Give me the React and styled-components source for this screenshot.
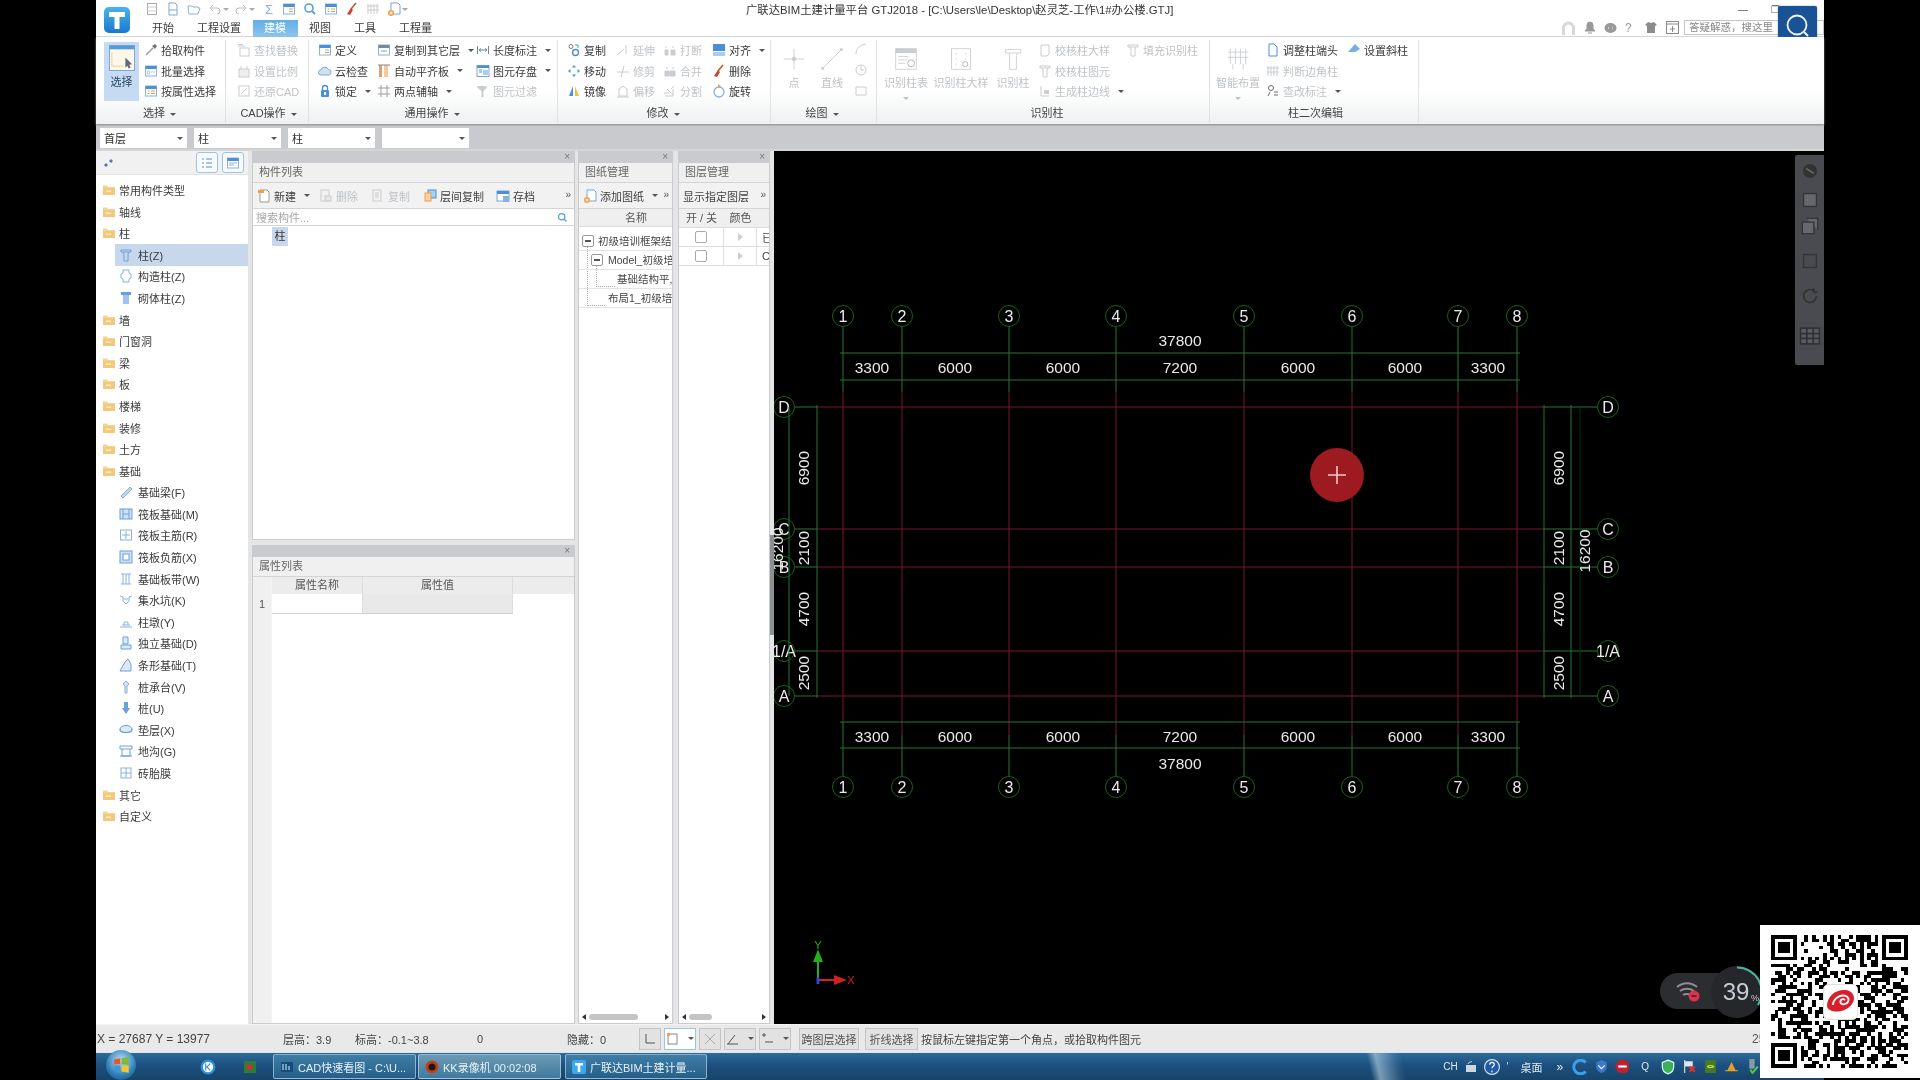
import React from 'react';
import styled, { createGlobalStyle } from 'styled-components';

const Global = createGlobalStyle`
  html, body { margin: 0; padding: 0; background: #000; overflow: hidden; }
  * { box-sizing: border-box; }
  svg { display: block; flex: none; }
`;
const FONT = '"Liberation Sans","Noto Sans CJK SC",sans-serif';

const Screen = styled.div`
  position: relative; width: 1920px; height: 1080px; background: #000; overflow: hidden;
  padding: 0 96px; font: 11px ${FONT}; color: #3a3a3a; filter: blur(.35px);
`;
const AppFrame = styled.div`display: flex; flex-direction: column; width: 1728px; height: 1080px;`;

/* ---------- title bar ---------- */
const TitleBar = styled.div`position: relative; display: flex; height: 37px; background: #fff; border-bottom: 1px solid #dcdcdc;`;
const LogoBox = styled.div`width: 46px; padding: 7px 0 0 8px;`;
const TitleStack = styled.div`flex: 1; display: flex; flex-direction: column; min-width: 0;`;
const TopRow = styled.div`display: flex; align-items: center; height: 20px; padding-bottom: 2px;`;
const QuickBar = styled.div`display: flex; align-items: center; gap: 7px; width: 604px; padding-left: 3px;`;
const WindowTitle = styled.div`font-size: 11.35px; color: #333; white-space: nowrap; width: 981px;`;
const WinBtn = styled.div`width: 32px; display: flex; justify-content: center; color: #555; font-size: 10px;`;
const TabRow = styled.div`display: flex; align-items: stretch; height: 16px;`;
const Tabs = styled.div`display: flex; margin-left: -1.5px;`;
const Tab = styled.div`
  padding: 0 11.5px; line-height: 16px; height: 17px; font-size: 11px;
  color: ${p => (p.$on ? '#fff' : '#3a3a3a')}; background: ${p => (p.$on ? 'linear-gradient(#62aee6,#8cc4ee)' : 'none')};
`;
const RightTools = styled.div`display: flex; align-items: center; gap: 8px; margin-left: auto; padding-bottom: 1px;`;
const AskBox = styled.div`
  width: 140px; height: 15px; border: 1px solid #c4c4c4; color: #888; font-size: 10.5px; line-height: 13px; padding-left: 4px; background: #fff; margin-left: -3px;
`;
const SearchBtn = styled.div`
  position: absolute; left: 1682px; top: 6px; width: 39px; height: 39px; background: #1a5296; border-radius: 2px;
  display: flex; align-items: center; justify-content: center; box-shadow: 0 0 2px #8aa;
`;

/* ---------- ribbon ---------- */
const Ribbon = styled.div`
  display: flex; height: 87px; background: linear-gradient(#fff 0, #fff 62%, #eef0f1 100%); box-shadow: 0 1px 2px #888; position: relative; z-index: 1;
`;
const Group = styled.div`
  width: ${p => p.$w}px; display: flex; flex-direction: column; border-right: 1px solid #e0e2e4; margin: 3px 0 1px;
`;
const GroupBody = styled.div`flex: 1; display: flex; padding: 0 0 0 ${p => p.$pl || 0}px;`;
const GroupLabel = styled.div`
  height: 17px; line-height: 14px; text-align: center; font-size: 11px; color: #444; padding: 0 ${p => p.$pr || 0}px 0 ${p => p.$pl || 0}px;
`;
const Caret = styled.span`display: inline-block; margin-left: 5px; border: 3px solid transparent; border-top: 3.5px solid #555; border-bottom: 0; vertical-align: middle;`;
const QaCaret = styled(Caret)`margin: 0 ${p => p.$mr}px 0 -6px; border-top-color: #aaa;`;
const BigCaret = styled(Caret)`margin: 4px 0 0; border-top-color: #bfc3c7;`;
const Col = styled.div`width: ${p => p.$w}px; display: flex; flex-direction: column; padding-top: 0;`;
const RowItem = styled.div`
  height: 20.6px; display: flex; align-items: center; gap: 3px; white-space: nowrap; font-size: 11px;
  color: ${p => (p.$dis ? '#bfc3c7' : '#3a3a3a')};
`;
const BigSel = styled.div`
  width: 35px; height: 59px; margin: 2px 5px 0 0; background: #c6daf1; display: flex; flex-direction: column; align-items: center; padding-top: 3px; gap: 2px; font-size: 11px; color: #2c4a6a;
`;
const BigItem = styled.div`
  width: ${p => p.$w}px; display: flex; flex-direction: column; align-items: center; padding-top: 7px; gap: 3px; font-size: 11px; white-space: nowrap; color: #bfc3c7;
`;
const SmallStack = styled.div`display: flex; flex-direction: column; gap: 6.5px; padding: 2px 0 0 3px;`;

/* ---------- selector toolbar ---------- */
const SelBar = styled.div`display: flex; height: 27px; background: #c8cacd; padding: 4px 0 0 4px; gap: 7px; border-bottom: 2px solid #d4d5d7;`;
const Drop = styled.div`
  width: 87px; height: 20px; background: #fff; display: flex; align-items: center; justify-content: space-between; padding: 0 4px; font-size: 11px; color: #333;
`;

/* ---------- workspace ---------- */
const Workspace = styled.div`flex: 1; display: flex; min-height: 0; background: #e4e5e6;`;
const TreePanel = styled.div`width: 152px; background: #fff; display: flex; flex-direction: column; margin-right: 4px;`;
const TreeTop = styled.div`height: 24px; background: #f1f1f1; display: flex; align-items: center; padding: 0 4px 0 5px; gap: 4px; border-bottom: 1px solid #e2e2e2;`;
const ViewBtn = styled.div`width: 22px; height: 21px; border: 1px solid #9cc3e6; border-radius: 3px; background: #f7fbff; display: flex; align-items: center; justify-content: center; margin-left: ${p => (p.$first ? 'auto' : 0)};`;
const TreeBody = styled.div`padding-top: 4.2px;`;
const TreeRow = styled.div`
  height: 21.6px; display: flex; align-items: center; gap: ${p => (p.$leaf ? '5px' : '3px')}; margin-left: ${p => (p.$leaf ? 19 : 0)}px;
  padding-left: ${p => (p.$leaf ? 4 : 6)}px; background: ${p => (p.$sel ? '#c8d8ec' : 'none')}; white-space: nowrap; font-size: 11px; color: #3a3a3a;
`;

const Stackd = styled.div`width: ${p => p.$w}px; display: flex; flex-direction: column; margin-right: ${p => p.$mr || 0}px; gap: 5px;`;
const Panel = styled.div`
  flex: ${p => (p.$h ? 'none' : 1)}; height: ${p => (p.$h ? p.$h + 'px' : 'auto')}; min-height: 0; background: #fff; border: 1px solid #c9cbcd; border-top: 0;
  display: flex; flex-direction: column; position: relative; overflow: hidden;
`;
const PanelStripe = styled.div`height: 12px; background: #c9cbce; color: #777; font-size: 10px; line-height: 11px; text-align: right; padding-right: 4px; flex: none;`;
const PanelTitle = styled.div`height: 20px; background: #f0f0f0; color: #666; line-height: 19px; padding-left: 6px; font-size: 11px; flex: none; border-bottom: 1px solid #d4d4d4;`;
const PanelTools = styled.div`height: 26px; background: #f2f2f2; border-bottom: 1px solid #d4d4d4; display: flex; align-items: center; padding-left: 4px; flex: none; position: relative;`;
const ToolItem = styled.div`
  width: ${p => p.$w}px; display: flex; align-items: center; gap: 3px; white-space: nowrap; font-size: 11px; color: ${p => (p.$dis ? '#bfc3c7' : '#3f3f3f')};
`;
const MoreMark = styled.div`position: absolute; right: 3px; top: 6px; color: #555; font-size: 10px; line-height: 12px;`;
const SearchRow = styled.div`height: 17px; border-bottom: 1px solid #d4d4d4; display: flex; align-items: center; justify-content: space-between; padding: 0 6px 0 3px; color: #a8a8a8; font-size: 11px; flex: none;`;
const ListBody = styled.div`padding: 1px 0 0 19px;`;
const ListChip = styled.div`width: 16px; height: 19px; background: #c8d8ec; text-align: center; line-height: 19px; color: #333;`;

const PropGrid = styled.div`flex: 1; display: flex; min-height: 0;`;
const RowNums = styled.div`width: 19px; background: #f0f0f0; padding-top: 17px; border-right: 1px solid #f4f4f4;`;
const RowNum = styled.div`height: 20px; line-height: 20px; text-align: center; color: #555; font-size: 11px;`;
const PropTable = styled.div`flex: 1; display: flex; flex-direction: column;`;
const PropRow = styled.div`display: grid; grid-template-columns: 91px 150px 1fr; height: ${p => p.$h}px;`;
const PropHead = styled.div`background: #ececec; border-right: ${p => (p.$last ? 0 : '1px solid #dcdcdc')}; text-align: center; line-height: 17px; color: #555; font-size: 11px;`;
const PropCell = styled.div`background: ${p => p.$c}; border-bottom: 1px solid #cfcfcf; border-right: 1px solid #dcdcdc;`;

const DrawHead = styled.div`height: 18px; background: #efefef; text-align: center; line-height: 18px; color: #555; border-bottom: 1px solid #ddd; flex: none; padding-left: 21px;`;
const DrawTree = styled.div`position: relative; padding-top: 4.5px; flex: 1;`;
const DrawRow = styled.div`
  position: relative; height: 19px; line-height: 18px; border-bottom: 1px solid #e4e4e4; padding-left: ${p => p.$pl}px; white-space: nowrap; overflow: hidden; font-size: 10.5px; color: #444;
`;
const Expander = styled.span`
  position: absolute; left: ${p => p.$x}px; top: 3px; width: 12px; height: 12px; border: 1px solid #999; border-radius: 2px; background: #fff;
  &::after { content: ''; position: absolute; left: 2px; right: 2px; top: 4px; height: 2px; background: #555; }
`;
const Connector = styled.span`
  position: absolute; left: ${p => p.$x}px; top: ${p => p.$y}px; width: ${p => p.$w}px; height: ${p => p.$h}px; border-left: 1px dotted #aaa; border-bottom: 1px dotted #aaa;
`;
const HScroll = styled.div`
  height: 13px; flex: none; display: flex; align-items: center; justify-content: space-between; padding: 0 3px; background: #fff;
`;
const ScrollThumb = styled.div`width: ${p => p.$w}px; height: 6px; background: #c4c4c4; border-radius: 3px; margin: 0 auto 0 3px;`;
const Arrow = styled.span`
  border: 3.5px solid transparent; ${p => (p.$r ? 'border-left: 4px solid #333; border-right: 0;' : 'border-right: 4px solid #333; border-left: 0;')}
`;
const LayerHead = styled.div`display: grid; grid-template-columns: 45px 33px 1fr; height: 19px; background: #efefef; border-bottom: 1px solid #ddd; line-height: 18px; color: #555; flex: none; text-align: center;`;
const LayerRow = styled.div`display: grid; grid-template-columns: 45px 33px 1fr; height: 19px; border-bottom: 1px solid #ddd; align-items: stretch;`;
const LayerCell = styled.div`border-right: 1px solid #ddd; display: flex; align-items: center; justify-content: center; overflow: hidden; font-size: 11px; color: #444;`;
const LayerName = styled(LayerCell)`justify-content: flex-start; padding-left: 5px; border-right: 0; white-space: nowrap;`;
const Check = styled.span`width: 12px; height: 12px; border: 1px solid #aaa; border-radius: 2px; background: #fff;`;
const PlayMark = styled.span`border: 4px solid transparent; border-left: 5px solid #cfcfcf; border-right: 0;`;

const Splitter = styled.div`width: 4px; display: flex; align-items: center; background: #e4e5e6;`;
const SplitGrip = styled.div`width: 4px; height: 100px; background: #8c8f93; margin-top: -6px;`;
const Canvas = styled.div`position: relative; width: 1050px; background: #000; overflow: hidden;`;
const FloatBar = styled.div`
  position: absolute; right: 0; top: 4px; width: 29px; height: 210px; background: #4a4b50; display: flex; flex-direction: column; align-items: center; padding-top: 7px; border-radius: 2px 0 0 2px;
`;
const FloatIcon = styled.div`margin-bottom: ${p => p.$mb}px;`;

/* ---------- status + taskbar ---------- */
const Status = styled.div`height: 28px; background: #e9e9e9; display: flex; align-items: center; font-size: 11px; color: #444; border-top: 1px solid #f2f2f2;`;
const StatusCell = styled.div`width: ${p => p.$w}px; white-space: nowrap; font-size: ${p => p.$fs || 11}px; padding-left: ${p => p.$pl || 0}px;`;
const StatusEnd = styled.div`margin-left: auto; width: 72px; white-space: nowrap; font-size: 12px; color: #555;`;
const StatusBtn = styled.div`
  width: ${p => p.$w}px; height: 22px; display: flex; align-items: center; justify-content: center; gap: 3px; margin-right: ${p => p.$mr || 2}px;
  border: 1px solid ${p => (p.$sel ? '#9cc3e6' : '#c4c4c4')}; background: ${p => (p.$sel ? '#fff' : '#e2e2e2')}; font-size: 11px; color: #555; white-space: nowrap;
`;
const Task = styled.div`
  height: 28px; display: flex; align-items: center; padding-left: 1px; border-top: 1px solid #d9e6ee;
  background: linear-gradient(77deg, transparent 73.6%, rgba(200,225,240,.55) 74.1%, rgba(200,225,240,.1) 75.2%, transparent 75.6%), linear-gradient(#2d6b98, #1c5080 45%, #174468);
`;
const Orb = styled.div`
  width: 30px; height: 30px; border-radius: 50%; margin: -3px 0 0 9px; background: radial-gradient(circle at 50% 35%, #b7dff5, #2f7fb8 60%, #12476f); display: flex; align-items: center; justify-content: center; flex: none;
`;
const PinSlot = styled.div`width: ${p => p.$w}px; display: flex; justify-content: center; flex: none;`;
const TaskBtn = styled.div`
  width: ${p => p.$w}px; height: 25px; margin-right: ${p => p.$mr || 2}px; display: flex; align-items: center; gap: 4px; padding-left: 6px; color: #e8f1f6; font-size: 11px; white-space: nowrap; overflow: hidden; flex: none;
  border: 1px solid rgba(220,235,245,.55); border-radius: 2px; background: ${p => (p.$lit ? 'linear-gradient(#6c9ab4,#3e7a9e)' : 'linear-gradient(#3f7ea6,#245f8a)')};
`;
const Tray = styled.div`margin-left: auto; display: flex; align-items: center; gap: 6px; padding-right: 64px; color: #dfe9ef; font-size: 10px; white-space: nowrap;`;
const TrayText = styled.span`font-size: ${p => p.$fs || 10}px; margin: 0 ${p => p.$m || 0}px;`;

/* ---------- overlays ---------- */
const QRCard = styled.div`position: absolute; left: 1760px; top: 925px; width: 160px; height: 153px; background: #fff; padding: 10px 11px;`;
const NetPill = styled.div`position: absolute; left: 1660px; top: 973px; width: 90px; height: 36px; border-radius: 18px; background: #2b2d31; display: flex; align-items: center; padding-left: 15px;`;
const NetDial = styled.div`position: absolute; left: 1711px; top: 966px; width: 52px; height: 52px;`;

/* ---------- icon drawing helpers ---------- */
const B = '#4a90d9', L = '#a9cdf0', O = '#f0a04b', G = '#c9ccd0', D = '#6a6a6a';
const I = ({ s = 14, v = 14, children }) => <svg width={s} height={s} viewBox={`0 0 ${v} ${v}`} fill="none">{children}</svg>;
const BigIco = ({ children }) => <svg width="24" height="24" viewBox="0 0 28 28" fill="none">{children}</svg>;
const Win = ({ c = B, dis }) => (
  <>
    <rect x="1.5" y="2" width="11" height="10" fill="#fff" stroke={dis ? G : '#8ab2dc'} />
    <rect x="1.5" y="2" width="11" height="3" fill={dis ? G : c} />
  </>
);
const icons = {
  pick: <><path d="M2 12L9 5" stroke="#999" strokeWidth="1.5" /><path d="M8 3l3 3 2-3-2-2z" fill="#777" /></>,
  batch: <><Win /><path d="M3.5 7h2v3h-2zM7 8h4" stroke={L} /></>,
  attr: <><Win /><path d="M3.5 7h2M3.5 9.5h2M7 7h4M7 9.5h4" stroke="#d8a850" /></>,
  find: <><rect x="3" y="5" width="9" height="8" stroke={G} /><path d="M1 3h7M1 1.5h5" stroke={G} /></>,
  scale: <><rect x="2" y="5" width="10" height="8" stroke={G} fill="#eee" /><path d="M4 5V2M10 5V2" stroke={G} /></>,
  restore: <><rect x="2" y="2" width="10" height="10" stroke={G} /><path d="M4 10l6-6" stroke={G} /></>,
  define: <><Win /><path d="M7 7h4M7 9.5h4" stroke="#d8a850" /></>,
  cloud: <path d="M3 11a2.5 2.5 0 010-5 4 4 0 017.5-.5A2.8 2.8 0 0111 11z" fill="#cfe2f5" stroke="#7fa6cc" />,
  lock: <><rect x="3" y="6" width="8" height="7" rx="1" fill={B} /><path d="M4.5 6V4a2.5 2.5 0 015 0v2" stroke={B} strokeWidth="1.4" /><rect x="6" y="8" width="2" height="3" fill="#fff" /></>,
  copyTo: <><Win c="#7a8a9a" /><path d="M4 8h6" stroke="#999" /></>,
  align: <><rect x="2" y="1" width="3" height="12" fill="#e4a06a" /><rect x="7" y="1" width="4" height="12" fill="#f5c8a0" /><path d="M1 1h12" stroke="#888" /></>,
  twoP: <path d="M1 4h12M1 10h12M4 1v12M10 1v12" stroke="#9aa0a6" />,
  len: <path d="M1.5 3v8M12.5 3v8M3 7h8M3 7l2-1.5M3 7l2 1.5M11 7L9 5.500M11 7L9 8.500" stroke="#6a88a8" />,
  store: <><rect x="1" y="1.5" width="12" height="11" fill="#fff" stroke="#7aa5d6" /><rect x="1" y="1.5" width="12" height="2.5" fill={B} /><rect x="7" y="6" width="5" height="5" fill={L} /><path d="M3 6h3M3 8h3" stroke={B} /></>,
  filter: <path d="M1.5 2h9v2l-3 3v6h-2V7L1.5 4z" fill={G} />,
  copy: <><circle cx="4" cy="3.5" r="2" stroke="#777" /><circle cx="8.5" cy="9.5" r="3" stroke={B} strokeWidth="1.4" /><path d="M8 2h3v3" stroke={B} /></>,
  move: <path d="M7 1l2 2.5H5zM7 13l2-2.5H5zM1 7l2.5-2v4zM13 7l-2.5-2v4z" fill={B} />,
  mirror: <><path d="M6 2v10H2z" fill={B} /><path d="M8 2v10h4z" fill="#f0c040" /></>,
  ext: <path d="M1 12l7-6M10 2v9" stroke={G} />,
  trim: <path d="M1 8h12M8 2l-3 11" stroke={G} />,
  offset: <path d="M3 12V5l4-3 4 3v7zM1 13h12" stroke={G} />,
  brk: <path d="M2 7h3v5H2zM8 7h4v5H8zM3 3v2M10 3v2" stroke={G} fill={G} />,
  merge: <path d="M2 7h4v5H2zM7 7h5v5H7zM4 3v2M10 3v2" stroke={G} fill={G} />,
  split: <path d="M2 12h8V5M1 9h5M4 5l6 6M11 2l-3 3" stroke={G} />,
  alignR: <><rect x="1" y="1" width="12" height="7" fill={B} /><rect x="1" y="9" width="12" height="4" fill={L} /></>,
  del: <><path d="M11 1L6 7" stroke="#b06020" strokeWidth="1.6" /><path d="M6 6l2 2-3 5-3-1z" fill="#d04030" /></>,
  rot: <><circle cx="7" cy="8" r="5" stroke="#8ab2dc" strokeWidth="1.3" /><path d="M6 0l3 2-3 2z" fill={O} /></>,
  curve: <path d="M2 12C2 6 6 3 12 2" stroke={G} />,
  arc: <><circle cx="7" cy="7" r="5" stroke={G} /><path d="M7 3v4h3" stroke={G} /></>,
  rect: <path d="M2 4h10v8H2z" stroke={G} />,
  chk: <path d="M3 2h8v9l-2 2H3z" stroke={G} />,
  pil: <path d="M2 2h10v2H2zM4 4l1 2v7h4V6l1-2" stroke={G} />,
  gen: <><path d="M3 2v10h8" stroke={G} /><rect x="6" y="6" width="5" height="4" fill={G} /></>,
  end: <path d="M3 1h5l3 3v9H3z" stroke={B} fill="#fff" />,
  slant: <path d="M1 9l7-8 5 5-5 3z" fill="#78aee4" />,
  corner: <path d="M2 2v10M5 2v10M8 2v10M11 2v10M1 4h12M1 8h12" stroke={G} />,
  mark: <><circle cx="5" cy="4" r="2.5" stroke={D} /><path d="M2 12l2-4M8 8h4M8 11h4" stroke={D} /></>,
  folder: <><path d="M1 2.5h4l1 1.5h7v8H1z" fill="#f7d48e" /><rect x="1" y="5" width="12" height="7" fill="#f4c87a" /><rect x="4" y="7.5" width="5" height="1.4" fill="#fff" opacity=".7" /></>,
  newd: <><path d="M3 1h7l2 2v10H3z" fill="#fff" stroke="#999" /><path d="M1 1h6v3H1z" fill={O} /></>,
  deld: <><rect x="2" y="1" width="8" height="11" stroke={G} /><rect x="6" y="7" width="6" height="5" fill="#e6e6e6" stroke={G} /></>,
  copyd: <><rect x="2" y="1" width="8" height="11" stroke={G} /><path d="M4 4h4M4 6h4M4 8h4" stroke={G} /></>,
  floor: <><rect x="5" y="1" width="8" height="8" fill={L} stroke={B} /><rect x="2" y="4" width="6" height="8" fill="#f8d0a8" stroke={O} /></>,
  save: <><rect x="1" y="2" width="12" height="10" fill="#fff" stroke="#7aa5d6" /><rect x="1" y="2" width="12" height="3" fill={B} /><rect x="7" y="7" width="6" height="6" fill="#8ab2dc" /></>,
  addd: <><path d="M4 1h7l2 2v9H4z" fill="#fff" stroke="#7aa5d6" /><circle cx="4" cy="11" r="3" fill={O} /><path d="M2.5 11h3M4 9.5v3" stroke="#fff" /></>,
  zoom: <><circle cx="6" cy="6" r="4" stroke="#5a9ed0" strokeWidth="1.6" /><path d="M9 9l3 3" stroke="#5a9ed0" strokeWidth="1.8" /></>,
};
const Ico = ({ n, s }) => <I s={s}>{icons[n]}</I>;

const Row = ({ i, t, dis, caret }) => (
  <RowItem $dis={dis}><Ico n={i} />{t}{caret && <Caret />}</RowItem>
);
const G_ = ({ w, pl, label, caret, pr, lpl, children }) => (
  <Group $w={w}>
    <GroupBody $pl={pl}>{children}</GroupBody>
    <GroupLabel $pr={pr} $pl={lpl}>{label}{caret && <Caret />}</GroupLabel>
  </Group>
);

const L1 = (a, b) => <path d={a} stroke={b || '#6aa0d8'} fill="none" />;
const leafIcons = {
  col: <><path d="M2 2h10v2H2z" fill="none" stroke="#6aa0d8" />{L1('M4 4l1 2v7h4V6l1-2')}</>,
  cons: <><path d="M4 1h6v3l2 1v4l-2 1v3H4v-3L2 9V5l2-1z" stroke="#8ab2dc" fill="#fff" /></>,
  brick: <><path d="M2 1h10v3H2z" fill="#6aa0d8" /><path d="M4 4h6v9H4z" fill="#9cc4ee" /></>,
  beam: <path d="M2 11L11 2l2 2-9 9z" fill="#c4d6ea" stroke="#8ab2dc" />,
  raft: <><rect x="1" y="2" width="12" height="10" fill="#cfe2f5" stroke="#6aa0d8" />{L1('M4 2v10M10 2v10M4 7h6')}</>,
  rebar: <><rect x="1.5" y="2" width="11" height="10" fill="#fff" stroke="#8ab2dc" />{L1('M7 3v8M3 7h8', '#8ab2dc')}</>,
  neg: <><rect x="1" y="1" width="12" height="12" fill="#cfe2f5" stroke="#6aa0d8" /><rect x="4" y="4" width="6" height="6" fill="#fff" stroke="#6aa0d8" /></>,
  strip: <path d="M2 2h10M2 12h10M4 2v10M7 2v10M10 2v10" stroke="#8ab2dc" />,
  pit: <path d="M1 3l3 1v4l3 3 3-3V4l3-1M5 6h4" stroke="#8ab2dc" />,
  ped: <path d="M1 12h12M3 10h8M5 10V7h4v3" stroke="#8ab2dc" />,
  iso: <><path d="M4 1h5v7H4zM2 9h10v4H2z" fill="#dbe9f8" stroke="#6aa0d8" /></>,
  bar: <path d="M1 13l5-9 3-3 3 5v7z" fill="#dbe9f8" stroke="#6aa0d8" />,
  cap: <path d="M7 1l3 3-2 2v7H6V6L4 4z" fill="#cfe2f5" stroke="#8ab2dc" />,
  pile: <><rect x="5" y="1" width="4" height="6" fill="#6aa0d8" /><path d="M3 7h8L7 13z" fill="#6aa0d8" /></>,
  pad: <><ellipse cx="7" cy="6" rx="6" ry="3.5" fill="#dbe9f8" stroke="#6aa0d8" /><path d="M1 6v2c0 2 12 2 12 0V6" stroke="#6aa0d8" /></>,
  ditch: <path d="M1 2h12v3H1zM3 5v7h8V5M1 12h12" stroke="#6aa0d8" />,
  film: <><rect x="2" y="2" width="10" height="10" stroke="#8ab2dc" />{L1('M7 2v10M2 7h10', '#8ab2dc')}</>,
};
const tree = [
  ['常用构件类型'], ['轴线'], ['柱'],
  ['柱(Z)', 'col', 1], ['构造柱(Z)', 'cons'], ['砌体柱(Z)', 'brick'],
  ['墙'], ['门窗洞'], ['梁'], ['板'], ['楼梯'], ['装修'], ['土方'], ['基础'],
  ['基础梁(F)', 'beam'], ['筏板基础(M)', 'raft'], ['筏板主筋(R)', 'rebar'], ['筏板负筋(X)', 'neg'], ['基础板带(W)', 'strip'],
  ['集水坑(K)', 'pit'], ['柱墩(Y)', 'ped'], ['独立基础(D)', 'iso'], ['条形基础(T)', 'bar'], ['桩承台(V)', 'cap'],
  ['桩(U)', 'pile'], ['垫层(X)', 'pad'], ['地沟(G)', 'ditch'], ['砖胎膜', 'film'], ['其它'], ['自定义'],
];

/* ---------- CAD drawing ---------- */
const GRN = '#23782a', RED = '#7c1233', TXT = '#eaeaea';
const xs = [843, 902, 1009, 1116, 1244, 1352, 1458, 1517];
const ys = [['D', 407], ['C', 529], ['B', 567], ['1/A', 651], ['A', 696]];
const dims = [[872, '3300'], [955, '6000'], [1063, '6000'], [1180, '7200'], [1298, '6000'], [1405, '6000'], [1488, '3300']];
const vdims = [[468, '6900'], [548, '2100'], [609, '4700'], [673, '2500']];
const CadText = ({ x, y, t, r, size = 15.5 }) => (
  <text x={x} y={y} fill={TXT} fontSize={size} fontFamily='"Liberation Sans",sans-serif' textAnchor="middle" dominantBaseline="central" transform={r ? `rotate(-90 ${x} ${y})` : undefined}>{t}</text>
);
const Bubble = ({ x, y, t }) => (
  <g>
    <circle cx={x} cy={y} r="10.5" stroke="#1a5f1a" fill="none" />
    <CadText x={x} y={y} t={t} size={16} />
  </g>
);
const Cad = () => (
  <svg width="1050" height="873" viewBox="774 151 1050 873" fill="none">
    {xs.map((x, i) => (
      <g key={x}>
        <path d={`M${x} 327V392`} stroke={GRN} />
        <path d={`M${x} 392V${i === 0 || i === 7 ? 722 : 735}`} stroke={RED} />
        <path d={`M${x} ${i === 0 || i === 7 ? 722 : 735}V776`} stroke={GRN} />
        <Bubble x={x} y={316} t={String(i + 1)} />
        <Bubble x={x} y={787} t={String(i + 1)} />
      </g>
    ))}
    {ys.map(([t, y]) => (
      <g key={t}>
        <path d={`M817 ${y}H1544`} stroke={RED} />
        <path d={`M795 ${y}H817M1544 ${y}H1597`} stroke={GRN} />
        <Bubble x={784} y={y} t={t} />
        <Bubble x={1608} y={y} t={t} />
      </g>
    ))}
    <path d="M840 353H1520M840 380H1520M840 722H1520M840 748H1520M789 407V696M817 405V698M1544 405V698M1571 405V698" stroke={GRN} />
    <path d="M1580 407V696" stroke="#0f2f0f" />
    {dims.map(([x, t]) => (
      <g key={x + t}>
        <CadText x={x} y={367} t={t} />
        <CadText x={x} y={736} t={t} />
      </g>
    ))}
    <CadText x={1180} y={340} t="37800" />
    <CadText x={1180} y={763} t="37800" />
    {vdims.map(([y, t]) => (
      <g key={y}>
        <CadText x={803} y={y} t={t} r />
        <CadText x={1558} y={y} t={t} r />
      </g>
    ))}
    <CadText x={1584} y={551} t="16200" r />
    <CadText x={777} y={549} t="16200" r />
    <circle cx="1337" cy="475" r="27" fill="#9c1a20" />
    <path d="M1337 466V484M1328 475H1346" stroke="#f0c8c8" strokeWidth="1.6" />
    <path d="M818 980V952M818 952l-3.5 9h7z" stroke="#1fb01f" fill="#1fb01f" strokeWidth="2" />
    <path d="M818 980H843M844 980l-9 3.5v-7z" stroke="#d02020" fill="#d02020" strokeWidth="2" />
    <path d="M818 977v7" stroke="#2a4ad0" strokeWidth="3" />
    <text x="818" y="949" fill="#1fb01f" fontSize="11" fontFamily='"Liberation Sans",sans-serif' textAnchor="middle">Y</text>
    <text x="851" y="984" fill="#d02020" fontSize="11" fontFamily='"Liberation Sans",sans-serif' textAnchor="middle">X</text>
  </svg>
);

/* ---------- QR ---------- */
const N = 37;
const buildQR = () => {
  let seed = 20180613;
  const rnd = () => { seed = (seed * 1664525 + 1013904223) >>> 0; return (seed >>> 16) / 65535; };
  const cells = [];
  const inFinder = (x, y) => (x < 8 && y < 8) || (x >= N - 8 && y < 8) || (x < 8 && y >= N - 8);
  const finder = (x, y, ox, oy) => {
    const a = x - ox, b = y - oy;
    if (a < 0 || b < 0 || a > 6 || b > 6) return false;
    return a === 0 || b === 0 || a === 6 || b === 6 || (a >= 2 && a <= 4 && b >= 2 && b <= 4);
  };
  for (let y = 0; y < N; y++) for (let x = 0; x < N; x++) {
    let on;
    if (inFinder(x, y)) on = finder(x, y, 0, 0) || finder(x, y, N - 7, 0) || finder(x, y, 0, N - 7);
    else if (x > 14 && x < 23 && y > 14 && y < 23) on = false;
    else if (y === 6) on = x % 2 === 0;
    else if (x === 6) on = y % 2 === 0;
    else on = rnd() > 0.5;
    if (on) cells.push([x, y]);
  }
  return cells;
};
const qrCells = buildQR();
const QR = () => (
  <svg width="137" height="133" viewBox={`0 0 ${N} ${N}`} preserveAspectRatio="none" shapeRendering="crispEdges">
    {qrCells.map(([x, y]) => <rect key={x + '-' + y} x={x} y={y} width="1.02" height="1.02" fill="#000" />)}
  </svg>
);
const QRLogo = styled.div`position: absolute; left: 63px; top: 59px; width: 35px; height: 36px;`;

export default function App() {
  return (
    <Screen>
      <Global />
      <AppFrame>
        <TitleBar>
          <LogoBox>
            <svg width="26" height="26" viewBox="0 0 26 26">
              <defs><linearGradient id="lg" x1="0" y1="0" x2="0" y2="1"><stop offset="0" stopColor="#45b4f2" /><stop offset="1" stopColor="#1c78cc" /></linearGradient></defs>
              <rect x="0" y="0" width="26" height="26" rx="5" fill="url(#lg)" />
              <path d="M5 5h16v5h-5.5v12h-5V10H5z" fill="#fff" />
            </svg>
          </LogoBox>
          <TitleStack>
            <TopRow>
              <QuickBar>
                <I><rect x="2.5" y="1.5" width="9" height="11" stroke="#aaa" /><path d="M2.5 5h9M2.500 9h9" stroke="#ccc" /></I>
                <I><path d="M3 1h6l2 2v10H3z" stroke="#7fa6cc" /><path d="M3 8h8" stroke="#7fa6cc" /></I>
                <I><path d="M1 4h4l1 1h5v1h2l-2 6H2z" stroke="#8ab2dc" /></I>
                <I><path d="M5 3L2 6l3 3M2 6h7a3 3 0 010 6" stroke="#bbb" /></I>
                <QaCaret $mr={-2} />
                <I><path d="M9 3l3 3-3 3M12 6H5a3 3 0 000 6" stroke="#bbb" /></I>
                <QaCaret $mr={1} />
                <svg width="12" height="14" viewBox="0 0 12 14"><text x="2" y="12" fontSize="13" fill="#8ab2dc" fontFamily="Liberation Sans">Σ</text></svg>
                <Ico n="define" /><Ico n="zoom" /><Ico n="attr" /><Ico n="del" /><Ico n="corner" /><Ico n="addd" />
                <QaCaret $mr={0} />
              </QuickBar>
              <WindowTitle>广联达BIM土建计量平台 GTJ2018 - [C:\Users\le\Desktop\赵灵芝-工作\1#办公楼.GTJ]</WindowTitle>
              <WinBtn>—</WinBtn>
              <WinBtn>❐</WinBtn>
            </TopRow>
            <TabRow>
              <Tabs>
                <Tab>开始</Tab><Tab>工程设置</Tab><Tab $on>建模</Tab><Tab>视图</Tab><Tab>工具</Tab><Tab>工程量</Tab>
              </Tabs>
              <RightTools>
                <svg width="15" height="14" viewBox="0 0 15 14"><path d="M1 14V7a6.5 6.5 0 0113 0v7h-3V7a3.5 3.5 0 00-7 0v7z" fill="#d8d8d8" /></svg>
                <svg width="12" height="14" viewBox="0 0 12 14"><path d="M6 1a3 3 0 013 3v4l2 2H1l2-2V4a3 3 0 013-3zM4 12h4" stroke="#999" fill="#999" /></svg>
                <svg width="13" height="12" viewBox="0 0 13 12"><ellipse cx="6.5" cy="6" rx="6" ry="5" fill="#999" /><path d="M4 6h1M8 6h1" stroke="#fff" /></svg>
                <svg width="11" height="13" viewBox="0 0 11 13"><text x="0" y="11" fontSize="12" fill="#999" fontFamily="Liberation Sans">?</text></svg>
                <svg width="14" height="13" viewBox="0 0 14 13"><path d="M4 1l3 1 3-1 3 3-2 1v7H3V5L1 4z" fill="#8c8c8c" /></svg>
                <svg width="13" height="13" viewBox="0 0 13 13"><rect x=".5" y=".5" width="12" height="12" fill="#fff" stroke="#888" /><path d="M0 3h13M6.5 5v6M4 8h5" stroke="#888" /></svg>
                <AskBox>答疑解惑，搜这里</AskBox>
              </RightTools>
            </TabRow>
          </TitleStack>
          <SearchBtn>
            <svg width="26" height="26" viewBox="0 0 26 26" fill="none"><circle cx="12" cy="12" r="9.5" stroke="#f2f6fa" strokeWidth="1.8" /><path d="M19 19l4 4" stroke="#f2f6fa" strokeWidth="2" /></svg>
          </SearchBtn>
        </TitleBar>

        <Ribbon>
          <G_ w={130} pl={8} label="选择" caret pr={2}>
            <BigSel>
              <svg width="26" height="26" viewBox="0 0 27 27"><rect x=".5" y=".5" width="26" height="26" fill="#fdf8e8" stroke="#7aa5d6" /><rect x=".5" y=".5" width="26" height="4" fill="#5a9ad8" /><path d="M3 8v14h12" stroke="#e0c070" strokeDasharray="2 1" fill="none" /><path d="M17 13l7 7-3 .5 1.5 3-2 1-1.5-3-2 2z" fill="#5a6a80" /></svg>
              选择
            </BigSel>
            <Col $w={80}>
              <Row i="pick" t="拾取构件" />
              <Row i="batch" t="批量选择" />
              <Row i="attr" t="按属性选择" />
            </Col>
          </G_>
          <G_ w={83} pl={11} label="CAD操作" caret lpl={3}>
            <Col $w={70}>
              <Row i="find" t="查找替换" dis />
              <Row i="scale" t="设置比例" dis />
              <Row i="restore" t="还原CAD" dis />
            </Col>
          </G_>
          <G_ w={249} pl={9} label="通用操作" caret pr={2}>
            <Col $w={59}>
              <Row i="define" t="定义" />
              <Row i="cloud" t="云检查" />
              <Row i="lock" t="锁定" caret />
            </Col>
            <Col $w={99}>
              <Row i="copyTo" t="复制到其它层" caret />
              <Row i="align" t="自动平齐板" caret />
              <Row i="twoP" t="两点辅轴" caret />
            </Col>
            <Col $w={78}>
              <Row i="len" t="长度标注" caret />
              <Row i="store" t="图元存盘" caret />
              <Row i="filter" t="图元过滤" dis />
            </Col>
          </G_>
          <G_ w={213} pl={9} label="修改" caret pr={2}>
            <Col $w={49}>
              <Row i="copy" t="复制" />
              <Row i="move" t="移动" />
              <Row i="mirror" t="镜像" />
            </Col>
            <Col $w={47}>
              <Row i="ext" t="延伸" dis />
              <Row i="trim" t="修剪" dis />
              <Row i="offset" t="偏移" dis />
            </Col>
            <Col $w={49}>
              <Row i="brk" t="打断" dis />
              <Row i="merge" t="合并" dis />
              <Row i="split" t="分割" dis />
            </Col>
            <Col $w={58}>
              <Row i="alignR" t="对齐" caret />
              <Row i="del" t="删除" />
              <Row i="rot" t="旋转" />
            </Col>
          </G_>
          <G_ w={106} pl={4} label="绘图" caret pr={3}>
            <BigItem $w={38}>
              <BigIco><path d="M14 2v24M2 14h24" stroke={G} /><circle cx="14" cy="14" r="2.5" fill={G} /></BigIco>
              点
            </BigItem>
            <BigItem $w={38}>
              <BigIco><path d="M3 25L25 3" stroke={G} /><rect x="1.5" y="23.5" width="3" height="3" fill={G} /><rect x="23.5" y="1.5" width="3" height="3" fill={G} /></BigIco>
              直线
            </BigItem>
            <SmallStack><Ico n="curve" /><Ico n="arc" /><Ico n="rect" /></SmallStack>
          </G_>
          <G_ w={333} pl={1} label="识别柱" lpl={8}>
            <BigItem $w={56}>
              <BigIco><rect x="2" y="2" width="24" height="24" stroke={G} /><rect x="2" y="2" width="24" height="5" fill={G} /><path d="M5 11h12M5 15h10M5 19h8" stroke={G} /><circle cx="20" cy="19" r="4" stroke="#aaa" /></BigIco>
              识别柱表
              <BigCaret />
            </BigItem>
            <BigItem $w={54}>
              <BigIco><rect x="3" y="2" width="22" height="24" stroke={G} /><path d="M8 8h1M19 8h1M8 14h1M19 14h1M8 20h1" stroke="#aaa" /><circle cx="19" cy="20" r="3" stroke="#aaa" /></BigIco>
              识别柱大样
            </BigItem>
            <BigItem $w={50}>
              <BigIco><path d="M5 3h18v4H5zM9 7l1 3v16h8V10l1-3" stroke={G} /></BigIco>
              识别柱
            </BigItem>
            <Col $w={88}>
              <Row i="chk" t="校核柱大样" dis />
              <Row i="pil" t="校核柱图元" dis />
              <Row i="gen" t="生成柱边线" dis caret />
            </Col>
            <Col $w={70}>
              <Row i="pil" t="填充识别柱" dis />
            </Col>
          </G_>
          <G_ w={209} label="柱二次编辑" lpl={3}>
            <BigItem $w={56}>
              <BigIco><path d="M5 2v18M11 2v18M17 2v18M23 2v18M2 6h24M2 12h24M8 20v6M20 20v6" stroke={G} /></BigIco>
              智能布置
              <BigCaret />
            </BigItem>
            <Col $w={81}>
              <Row i="end" t="调整柱端头" />
              <Row i="corner" t="判断边角柱" dis />
              <Row i="mark" t="查改标注" dis caret />
            </Col>
            <Col $w={66}>
              <Row i="slant" t="设置斜柱" />
            </Col>
          </G_>
        </Ribbon>

        <SelBar>
          {['首层', '柱', '柱', ''].map((t, i) => <Drop key={i}><span>{t}</span><Caret /></Drop>)}
        </SelBar>

        <Workspace>
          <TreePanel>
            <TreeTop>
              <I s={14}><path d="M3 9l2-2 2 2-2 2zM8 5l2-2 2 2-2 2z" fill="#4a78b8" /></I>
              <ViewBtn $first><I><path d="M2 3h2M6 3h6M2 7h2M6 7h6M2 11h2M6 11h6" stroke="#5a8ac0" /></I></ViewBtn>
              <ViewBtn><I><Win /><path d="M3 7h8M3 9h5" stroke="#8ab2dc" /></I></ViewBtn>
            </TreeTop>
            <TreeBody>
              {tree.map(([t, ic, sel], i) => (
                <TreeRow key={i} $leaf={!!ic} $sel={!!sel}>
                  {ic ? <I>{leafIcons[ic]}</I> : <Ico n="folder" />}
                  <span>{t}</span>
                </TreeRow>
              ))}
            </TreeBody>
          </TreePanel>

          <Stackd $w={323} $mr={3}>
            <Panel $h={389}>
              <PanelStripe>×</PanelStripe>
              <PanelTitle>构件列表</PanelTitle>
              <PanelTools>
                <ToolItem $w={62}><Ico n="newd" />新建<Caret /></ToolItem>
                <ToolItem $w={52} $dis><Ico n="deld" />删除</ToolItem>
                <ToolItem $w={52} $dis><Ico n="copyd" />复制</ToolItem>
                <ToolItem $w={73}><Ico n="floor" />层间复制</ToolItem>
                <ToolItem $w={60}><Ico n="save" />存档</ToolItem>
                <MoreMark>»</MoreMark>
              </PanelTools>
              <SearchRow>搜索构件...<Ico n="zoom" s={11} /></SearchRow>
              <ListBody><ListChip>柱</ListChip></ListBody>
            </Panel>
            <Panel>
              <PanelStripe>×</PanelStripe>
              <PanelTitle>属性列表</PanelTitle>
              <PropGrid>
                <RowNums><RowNum>1</RowNum></RowNums>
                <PropTable>
                  <PropRow $h={17}>
                    <PropHead>属性名称</PropHead><PropHead>属性值</PropHead><PropHead $last />
                  </PropRow>
                  <PropRow $h={20}>
                    <PropCell $c="#fff" /><PropCell $c="#e9e9e9" />
                  </PropRow>
                </PropTable>
              </PropGrid>
            </Panel>
          </Stackd>

          <Stackd $w={95} $mr={5}>
            <Panel>
              <PanelStripe>×</PanelStripe>
              <PanelTitle>图纸管理</PanelTitle>
              <PanelTools>
                <ToolItem $w={80}><Ico n="addd" />添加图纸<Caret /></ToolItem>
                <MoreMark>»</MoreMark>
              </PanelTools>
              <DrawHead>名称</DrawHead>
              <DrawTree>
                <Connector $x={8} $y={18} $w={18} $h={61} />
                <Connector $x={17} $y={38} $w={19} $h={22} />
                <DrawRow $pl={19}><Expander $x={3} />初级培训框架结</DrawRow>
                <DrawRow $pl={29}><Expander $x={12} />Model_初级培</DrawRow>
                <DrawRow $pl={38}>基础结构平,</DrawRow>
                <DrawRow $pl={29}>布局1_初级培</DrawRow>
              </DrawTree>
              <HScroll><Arrow /><ScrollThumb $w={49} /><Arrow $r /></HScroll>
            </Panel>
          </Stackd>

          <Stackd $w={92}>
            <Panel>
              <PanelStripe>×</PanelStripe>
              <PanelTitle>图层管理</PanelTitle>
              <PanelTools>
                <ToolItem $w={80}>显示指定图层</ToolItem>
                <MoreMark>»</MoreMark>
              </PanelTools>
              <LayerHead><span>开 / 关</span><span>颜色</span><span /></LayerHead>
              <LayerRow><LayerCell><Check /></LayerCell><LayerCell><PlayMark /></LayerCell><LayerName>已</LayerName></LayerRow>
              <LayerRow><LayerCell><Check /></LayerCell><LayerCell><PlayMark /></LayerCell><LayerName>C</LayerName></LayerRow>
              <DrawTree />
              <HScroll><Arrow /><ScrollThumb $w={23} /><Arrow $r /></HScroll>
            </Panel>
          </Stackd>

          <Splitter><SplitGrip /></Splitter>

          <Canvas>
            <Cad />
            <FloatBar>
              <FloatIcon $mb={11}><I s={18}><circle cx="7" cy="7" r="5.5" fill="#333" /><path d="M4 5l6 4" stroke="#777" /></I></FloatIcon>
              <FloatIcon $mb={8}><I s={18}><rect x="2" y="2" width="10" height="10" fill="#66686d" stroke="#333" /></I></FloatIcon>
              <FloatIcon $mb={17}><I s={18}><path d="M1 4h9v9H1zM4 1h9v9" stroke="#333" fill="#66686d" /></I></FloatIcon>
              <FloatIcon $mb={17}><I s={18}><rect x="2" y="2" width="10" height="10" stroke="#333" /></I></FloatIcon>
              <FloatIcon $mb={20}><I s={18}><path d="M12 7a5 5 0 11-2-4M10 1v3h3" stroke="#333" strokeWidth="1.4" /></I></FloatIcon>
              <FloatIcon $mb={0}><I s={22}><rect x="1" y="2" width="12" height="10" stroke="#2f3034" fill="#5a5b60" /><path d="M1 5.5h12M1 8.5h12M5 2v10M9 2v10" stroke="#2f3034" /></I></FloatIcon>
            </FloatBar>
          </Canvas>
        </Workspace>

        <Status>
          <StatusCell $w={187} $fs={12} $pl={1}>X = 27687 Y = 13977</StatusCell>
          <StatusCell $w={72}>层高：3.9</StatusCell>
          <StatusCell $w={122}>标高：-0.1~3.8</StatusCell>
          <StatusCell $w={90}>0</StatusCell>
          <StatusCell $w={72}>隐藏：0</StatusCell>
          <StatusBtn $w={22} $mr={3}><I><path d="M3 2v9h9" stroke="#555" /></I></StatusBtn>
          <StatusBtn $w={32} $mr={3} $sel><I><rect x="2" y="2" width="9" height="10" stroke="#888" /><rect x="1" y="1" width="3" height="3" fill={O} /></I><Caret /></StatusBtn>
          <StatusBtn $w={22} $mr={3}><I><path d="M2 2l10 10M12 2L2 12" stroke="#aaa" /></I></StatusBtn>
          <StatusBtn $w={32} $mr={3}><I><path d="M1 12h11M2 12L9 3" stroke="#555" /></I><Caret /></StatusBtn>
          <StatusBtn $w={32} $mr={8}><I><path d="M1 3h4M3 1v4M4 10h8" stroke="#555" /></I><Caret /></StatusBtn>
          <StatusBtn $w={60} $mr={6}>跨图层选择</StatusBtn>
          <StatusBtn $w={53} $mr={3}>折线选择</StatusBtn>
          <StatusCell $w={400}>按鼠标左键指定第一个角点，或拾取构件图元</StatusCell>
          <StatusEnd>25</StatusEnd>
        </Status>

        <Task>
          <Orb>
            <I s={17}><path d="M1 2l5-1v5H1z" fill="#e8552d" /><path d="M7 1l6-1v6H7z" fill="#7dbb3a" /><path d="M1 7h5v5l-5-1z" fill="#3a9ad9" /><path d="M7 7h6v6l-6-1z" fill="#f5c52d" /></I>
          </Orb>
          <PinSlot $w={58} />
          <PinSlot $w={28}>
            <I s={16}><circle cx="7" cy="7" r="6.5" fill="#2f8fd8" /><circle cx="7" cy="7" r="4.5" fill="#fff" /><path d="M5 4v6M9 4L6 7l3 3" stroke="#2f8fd8" /></I>
          </PinSlot>
          <PinSlot $w={14} />
          <PinSlot $w={28}>
            <I s={14}><rect x="1" y="1" width="12" height="12" fill="#2d7d3a" /><path d="M4 3l7 4-7 4z" fill="#d03030" /></I>
          </PinSlot>
          <PinSlot $w={9} />
          <TaskBtn $w={143}><I><rect x="1" y="2" width="12" height="10" fill="#1a4a80" /><path d="M3 4v6M6 4v6M9 6v4" stroke="#cfe" /></I>CAD快速看图 - C:\U...</TaskBtn>
          <TaskBtn $w={143} $mr={4} $lit>
            <I><circle cx="7" cy="7" r="6.5" fill="#c04018" /><circle cx="7" cy="7" r="3.5" fill="#201810" /></I>KK录像机 00:02:08
          </TaskBtn>
          <TaskBtn $w={142}>
            <I><rect width="14" height="14" rx="2" fill="#3aa8ee" /><path d="M3 3h8v2.5H8.3V12H5.7V5.5H3z" fill="#fff" /></I>广联达BIM土建计量...
          </TaskBtn>
          <Tray>
            <TrayText>CH</TrayText>
            <I><rect x="2" y="5" width="10" height="7" fill="#cdd6dc" /><path d="M4 4c0-2 4-2 4-3" stroke="#cdd6dc" /></I>
            <I s={16}><circle cx="7" cy="7" r="6.5" fill="#1d5aa8" stroke="#dde" /><path d="M5 5a2 2 0 114 0c0 1.500-2 1.500-2 3M7 10v1.500" stroke="#fff" /></I>
            <TrayText $m={1}>'</TrayText>
            <TrayText $fs={11} $m={5}>桌面</TrayText>
            <TrayText $fs={12} $m={3}>»</TrayText>
            <I s={16}><path d="M12 3a6 6 0 100 8" stroke="#3aa0ea" strokeWidth="2.6" /></I>
            <I s={15}><path d="M7 1l5 2v4c0 3-2 5-5 6-3-1-5-3-5-6V3z" fill="#3a78c8" /><path d="M4 6l3 3 3-3" stroke="#fff" /></I>
            <I s={15}><circle cx="7" cy="7" r="6.5" fill="#c02030" /><rect x="3" y="6" width="8" height="2" fill="#fff" /></I>
            <TrayText $m={5}>Q</TrayText>
            <I s={16}><path d="M7 1l5 2v4c0 3-2 5-5 6-3-1-5-3-5-6V3z" fill="#3fb05a" stroke="#dff" /></I>
            <I s={15}><path d="M2 1h1v12H2zM3 2h7v5H3z" fill="#dfe6ec" /><path d="M7 7l5 5M12 7l-5 5" stroke="#e03030" strokeWidth="2" /></I>
            <I s={15}><rect x="2" y="1" width="10" height="12" fill="#4a7a20" /><path d="M4 7a4 3 0 016 0 4 3 0 01-6 0" stroke="#bde05a" /></I>
            <I s={15}><path d="M1 11h12M7 4l3 6H4z" fill="#e8a02a" stroke="#e8a02a" /></I>
            <I s={15}><rect x="4" y="0" width="5" height="9" fill="#8a98a4" /><path d="M5 10l2 3 5-6" stroke="#4ac050" strokeWidth="2" /></I>
          </Tray>
        </Task>
      </AppFrame>

      <NetPill>
        <svg width="26" height="22" viewBox="0 0 26 22" fill="none">
          <path d="M2 7c6-5 14-5 20 0M5 11c4-3 10-3 14 0M8 15c2-1.500 6-1.500 8 0" stroke="#8c8f93" strokeWidth="2" />
          <circle cx="19" cy="16" r="5.500" fill="#e0304c" /><path d="M16.500 16h5" stroke="#2b2d31" strokeWidth="1.600" />
        </svg>
      </NetPill>
      <NetDial>
        <svg width="52" height="52" viewBox="0 0 52 52" fill="none">
          <circle cx="26" cy="26" r="26" fill="#25272b" />
          <path d="M26 1.500A24.500 24.500 0 0147 39" stroke="#46b89c" strokeWidth="2" />
          <text x="25" y="34" fontSize="24" fill="#c8ccd4" textAnchor="middle" fontFamily='"Liberation Sans",sans-serif'>39</text>
          <text x="44" y="35" fontSize="9" fill="#c8ccd4" textAnchor="middle" fontFamily='"Liberation Sans",sans-serif'>%</text>
        </svg>
      </NetDial>
      <QRCard>
        <QR />
        <QRLogo>
          <svg width="35" height="36" viewBox="0 0 35 36" fill="none">
            <rect x=".5" y=".5" width="34" height="35" rx="5" fill="#fff" stroke="#e0e0e0" />
            <path d="M4 22C4 12 13 5 23 6c8 1 10 9 6 14-4 6-13 9-20 7-3-1-5-3-5-5z" fill="#d8202c" />
            <path d="M10 21c0-6 7-11 13-9 4 2 3 7-1 8-3 1-6-1-4-4 1-1 3-1 4 0" stroke="#fff" strokeWidth="1.800" />
          </svg>
        </QRLogo>
      </QRCard>
    </Screen>
  );
}
